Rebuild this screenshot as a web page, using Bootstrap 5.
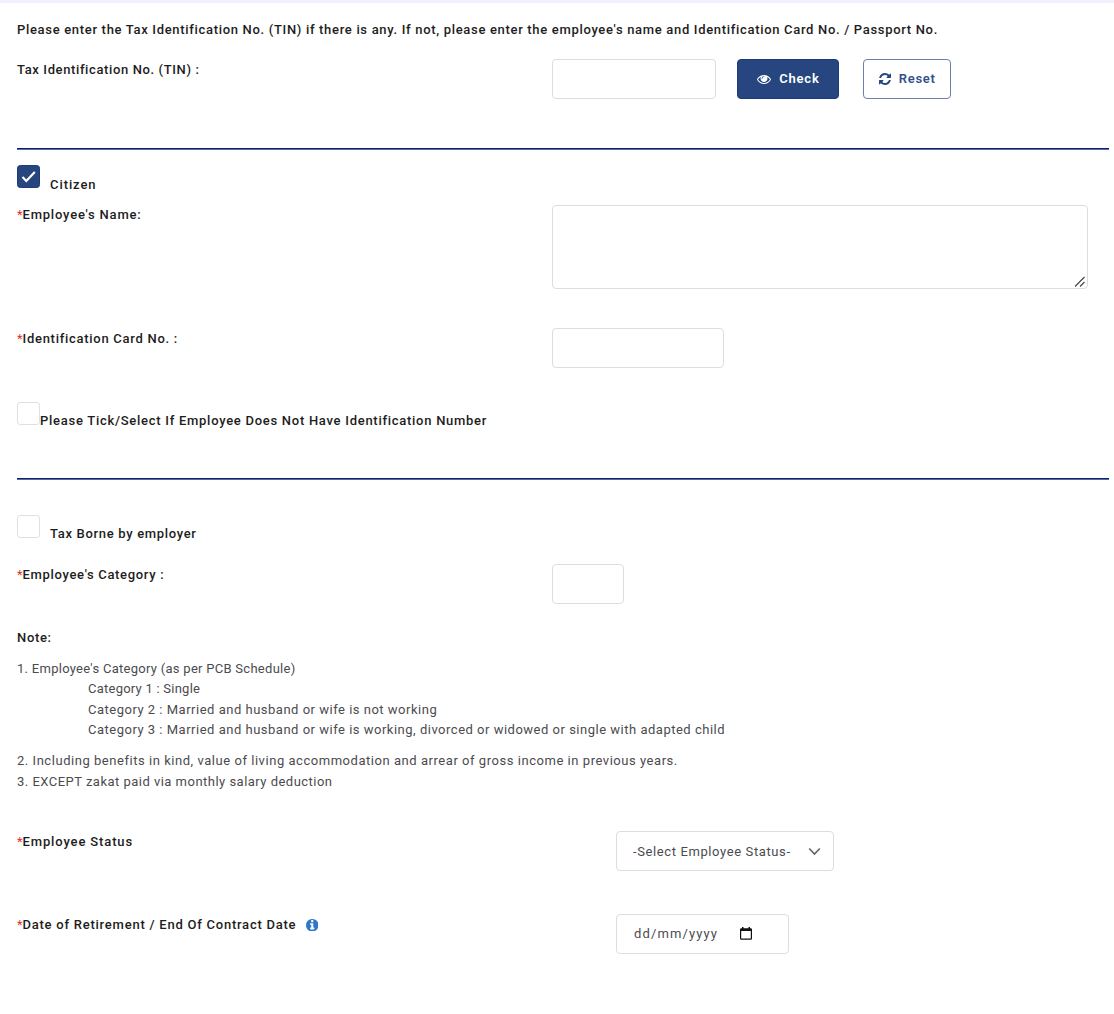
<!DOCTYPE html>
<html lang="en">
<head>
<meta charset="utf-8">
<meta name="viewport" content="width=device-width, initial-scale=1">
<title>Employee Information</title>
<link href="https://cdn.jsdelivr.net/npm/bootstrap@5.3.0/dist/css/bootstrap.min.css" rel="stylesheet">
<style>
body{font:400 13px/20.5px Roboto,"Liberation Sans",sans-serif;color:#4b4b4f;background:#fff;letter-spacing:.505px;min-height:1014px;border-top:3px solid #f1f0fe;overflow:hidden}
.page-form{padding:16px 5px 0 17px}
.f-label{font-weight:500;color:#1d1d21;letter-spacing:.68px;white-space:nowrap;padding-top:.7px}
.f-label .req{color:#e0322d;font-weight:400;letter-spacing:0;display:inline-block;width:5.5px}
.col-left{width:535px;flex:none}
.col-left-wide{width:599px;flex:none}
.form-control,.form-select{border:1px solid #dcdce3;border-radius:4px;height:39.5px;padding:0 16px;font-size:13px;color:#4b4b4f;background-color:#fff;letter-spacing:inherit}
.tin-box{width:164px;margin-right:21.4px}
.id-box{width:172px}
.cat-box{width:72px}
textarea.form-control{width:536px;height:84.5px;resize:none}
.name-wrap{position:relative;width:536px}
.grip{position:absolute;right:2px;bottom:1px}
.btn{height:39.5px;padding:0;font-size:13px;font-weight:600;border-radius:4px;display:flex;align-items:center;justify-content:center;line-height:1}
.btn-check-tin{width:102px;background:#27467f;border:1px solid #1c3a7a;color:#fff;margin-right:23.6px;letter-spacing:.8px}
.btn-reset{width:88.4px;border:1px solid #6c81ab;color:#34518a;background:#fff;letter-spacing:.67px}
.rule{height:2px;background:linear-gradient(#141f69 0 50%,#5468aa 50%);opacity:1;border:0;margin:0}
.form-check-input{width:23px;height:23px;border:1px solid #dedee3;border-radius:4px;margin:0;flex:none;float:none}
.form-check-input:checked{background-color:#27467f;border-color:#1f3c78}
.form-check-input:checked[type=checkbox]{background-image:url("data:image/svg+xml,%3csvg xmlns='http://www.w3.org/2000/svg' viewBox='0 0 21 21'%3e%3cpath fill='none' stroke='%23fff' stroke-width='2.2' d='m4.500 11 3.800 4 8.500-9'/%3e%3c/svg%3e")}
.tick-text{padding-top:9.5px}
.tick-gap{margin-left:10px}
.r-intro{height:40px}.r-tin{height:89px}.r-citizen{height:54.6px;padding-top:15px}.r-name{height:123.6px}
.r-id{height:73.4px}.r-noid{height:76.4px}.r-tax{height:84.2px;padding-top:35px}.r-cat{height:63px}
.r-note{height:31.6px}.r-status{height:83px}
.status-box{width:218px;letter-spacing:.61px;background-image:none;display:flex;align-items:center;justify-content:space-between;padding:1px 12px 0 16px}
.date-box{width:173px;letter-spacing:1.13px;display:flex;align-items:center;padding:0 0 1px 17px}
</style>
<script src="https://cdn.jsdelivr.net/npm/bootstrap@5.3.0/dist/js/bootstrap.bundle.min.js"></script>
</head>
<body>
<form class="page-form">
  <div class="r-intro f-label">Please enter the Tax Identification No. (TIN) if there is any. If not, please enter the employee's name and Identification Card No. / Passport No.</div>
  <div class="r-tin d-flex align-items-start">
    <div class="col-left f-label" style="letter-spacing:.62px">Tax Identification No. (TIN) :</div>
    <input class="form-control tin-box" type="text" aria-label="TIN">
    <button type="button" class="btn btn-check-tin"><svg class="me-2" width="14" height="14" viewBox="0 0 1792 1792" fill="#fff"><path d="M1664 960q-152-236-381-353 61 104 61 225 0 185-131.500 316.500t-316.500 131.500-316.500-131.500-131.500-316.500q0-121 61-225-229 117-381 353 133 205 333.500 326.500t434.500 121.500 434.500-121.500 333.500-326.500zm-720-384q0-20-14-34t-34-14q-125 0-214.500 89.500t-89.500 214.500q0 20 14 34t34 14 34-14 14-34q0-86 61-147t147-61q20 0 34-14t14-34zm848 384q0 34-20 69-140 230-376.500 368.500t-499.500 138.500-499.500-139-376.500-368q-20-35-20-69t20-69q140-229 376.500-368t499.500-139 499.500 139 376.500 368q20 35 20 69z"/></svg>Check</button>
    <button type="button" class="btn btn-reset"><svg class="me-2" width="12" height="14" viewBox="0 0 1536 1792" fill="#27467f"><path d="M1511 1056q0 5-1 7-64 268-268 434.500t-478 166.500q-146 0-282.500-55t-243.500-157l-129 129q-19 19-45 19t-45-19-19-45v-448q0-26 19-45t45-19h448q26 0 45 19t19 45-19 45l-137 137q71 66 161 102t187 36q134 0 250-65t186-179q11-17 53-117 8-23 30-23h192q13 0 22.500 9.500t9.500 22.500zm25-800v448q0 26-19 45t-45 19h-448q-26 0-45-19t-19-45 19-45l138-138q-148-137-349-137-134 0-250 65t-186 179q-11 17-53 117-8 23-30 23h-199q-13 0-22.500-9.500t-9.500-22.500v-7q65-268 270-434.500t480-166.500q146 0 284 55.500t245 156.500l130-129q19-19 45-19t45 19 19 45z"/></svg>Reset</button>
  </div>
  <hr class="rule">
  <div class="r-citizen d-flex align-items-start">
    <input class="form-check-input" type="checkbox" checked aria-label="Citizen">
    <span class="tick-text tick-gap f-label" style="letter-spacing:.92px">Citizen</span>
  </div>
  <div class="r-name d-flex align-items-start">
    <div class="col-left f-label" style="letter-spacing:.8px"><span class="req">*</span>Employee's Name:</div>
    <div class="name-wrap"><textarea class="form-control" aria-label="Employee's Name"></textarea>
      <svg class="grip" width="12" height="12" viewBox="0 0 12 12" fill="none" stroke="#444" stroke-width="1.1"><path d="M1 10.500 10.500 1M6 10.500 10.500 6"/></svg></div>
  </div>
  <div class="r-id d-flex align-items-start">
    <div class="col-left f-label" style="letter-spacing:.72px"><span class="req">*</span>Identification Card No. :</div>
    <input class="form-control id-box" type="text" aria-label="Identification Card No.">
  </div>
  <div class="r-noid d-flex align-items-start">
    <input class="form-check-input" type="checkbox" aria-label="No identification number">
    <span class="tick-text f-label" style="letter-spacing:.725px">Please Tick/Select If Employee Does Not Have Identification Number</span>
  </div>
  <hr class="rule">
  <div class="r-tax d-flex align-items-start">
    <input class="form-check-input" type="checkbox" aria-label="Tax borne">
    <span class="tick-text tick-gap f-label">Tax Borne by employer</span>
  </div>
  <div class="r-cat d-flex align-items-start">
    <div class="col-left f-label"><span class="req">*</span>Employee's Category :</div>
    <input class="form-control cat-box" type="text" aria-label="Employee's Category">
  </div>
  <div class="r-note f-label">Note:</div>
  <div style="letter-spacing:.28px">1. Employee's Category (as per PCB Schedule)</div>
  <div class="note-list" style="padding-left:71px">
    <div style="letter-spacing:.24px">Category 1 : Single</div>
    <div>Category 2 : Married and husband or wife is not working</div>
    <div>Category 3 : Married and husband or wife is working, divorced or widowed or single with adapted child</div>
  </div>
  <div style="letter-spacing:.54px;padding-top:10.5px">2. Including benefits in kind, value of living accommodation and arrear of gross income in previous years.</div>
  <div style="letter-spacing:.48px;padding-bottom:39px">3. EXCEPT zakat paid via monthly salary deduction</div>
  <div class="r-status d-flex align-items-start">
    <div class="col-left-wide f-label" style="letter-spacing:.87px"><span class="req">*</span>Employee Status</div>
    <div class="form-select status-box" role="combobox" aria-label="Employee Status">-Select Employee Status-<svg width="13" height="9" viewBox="0 0 13 9" fill="none" stroke="#66666a" stroke-width="1.700"><path d="M1.200 1.500 6.500 7 11.800 1.500"/></svg></div>
  </div>
  <div class="d-flex align-items-start">
    <div class="col-left-wide f-label d-flex align-items-center" style="letter-spacing:.76px"><span class="req">*</span>Date of Retirement / End Of Contract Date<svg style="margin-left:9.5px" width="12.5" height="12.5" viewBox="0 128 1536 1536" fill="#2f78c8"><path d="M1024 1376v-160q0-14-9-23t-23-9h-96v-512q0-14-9-23t-23-9h-320q-14 0-23 9t-9 23v160q0 14 9 23t23 9h96v320h-96q-14 0-23 9t-9 23v160q0 14 9 23t23 9h448q14 0 23-9t9-23zm-128-896v-192q0-14-9-23t-23-9h-192q-14 0-23 9t-9 23v192q0 14 9 23t23 9h192q14 0 23-9t9-23zm640 416q0 209-103 385.500t-279.500 279.500-385.500 103-385.500-103-279.500-279.500-103-385.500 103-385.500 279.500-279.500 385.500-103 385.500 103 279.500 279.500 103 385.500z"/></svg></div>
    <div class="form-control date-box">dd/mm/yyyy<svg style="margin-left:22px" width="12" height="13" viewBox="0 0 12 13"><path fill="#111" fill-rule="evenodd" d="M2 0h1.500v1.300h5V0H10v1.300h.8Q12 1.300 12 2.500v9Q12 12.700 10.800 12.700H1.200Q0 12.700 0 11.500v-9Q0 1.300 1.200 1.300H2zM1.200 4v7.500h9.600V4z"/></svg></div>
  </div>
</form>
</body>
</html>
